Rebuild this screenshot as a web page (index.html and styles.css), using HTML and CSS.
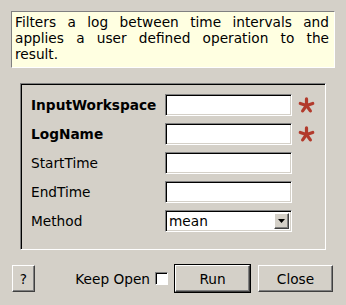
FILE: index.html
```html
<!DOCTYPE html>
<html lang="en">
<head>
  <meta charset="UTF-8" />
  <title>FilterLogByTime</title>
  <link rel="stylesheet" href="styles.css">
</head>
<body>
  <div class="dialog">
    <div class="description">
      Filters a log between time intervals and applies a user defined operation to the result.
    </div>

    <div class="group">
      <div class="row">
        <label class="bold">InputWorkspace</label>
        <span class="field"></span>
        <svg class="star" viewBox="0 0 18 18" aria-hidden="true">
          <g stroke="#b23a2c" stroke-width="3.4" stroke-linecap="round">
            <line x1="9" y1="9" x2="9" y2="2"/>
            <line x1="9" y1="9" x2="15.6" y2="6.8"/>
            <line x1="9" y1="9" x2="13.1" y2="14.7"/>
            <line x1="9" y1="9" x2="4.9" y2="14.7"/>
            <line x1="9" y1="9" x2="2.4" y2="6.8"/>
          </g>
        </svg>
      </div>
      <div class="row">
        <label class="bold">LogName</label>
        <span class="field"></span>
        <svg class="star" viewBox="0 0 18 18" aria-hidden="true">
          <g stroke="#b23a2c" stroke-width="3.4" stroke-linecap="round">
            <line x1="9" y1="9" x2="9" y2="2"/>
            <line x1="9" y1="9" x2="15.6" y2="6.8"/>
            <line x1="9" y1="9" x2="13.1" y2="14.7"/>
            <line x1="9" y1="9" x2="4.9" y2="14.7"/>
            <line x1="9" y1="9" x2="2.4" y2="6.8"/>
          </g>
        </svg>
      </div>
      <div class="row">
        <label>StartTime</label>
        <span class="field"></span>
      </div>
      <div class="row">
        <label>EndTime</label>
        <span class="field"></span>
      </div>
      <div class="row">
        <label>Method</label>
        <span class="field combo">
          <span class="combo-text">mean</span>
          <span class="combo-btn">
            <svg viewBox="0 0 7 4" width="7" height="4" aria-hidden="true"><polygon points="0,0 7,0 3.5,4" fill="#000"/></svg>
          </span>
        </span>
      </div>
    </div>

    <div class="buttons">
      <button class="btn help">?</button>
      <span class="spacer"></span>
      <span class="keep">Keep Open</span>
      <span class="check"></span>
      <button class="btn run">Run</button>
      <button class="btn close">Close</button>
    </div>
  </div>
</body>
</html>
```

FILE: styles.css
```css
* {
  box-sizing: border-box;
}

body {
  margin: 0;
  background: #d4d0c8;
  font-family: "DejaVu Sans", sans-serif;
  font-size: 13.7px;
  color: #000;
}

.dialog {
  width: 346px;
  height: 305px;
  padding: 11px 11px 0 11px;
}

.description {
  background: #ffffe1;
  border-top: 1px solid #808080;
  border-left: 1px solid #808080;
  border-right: 1px solid #fff;
  border-bottom: 1px solid #fff;
  height: 57px;
  padding: 2px 5px 0 3px;
  line-height: 16px;
  text-align: justify;
}

.group {
  margin: 15px 9px 0 9px;
  height: 167px;
  border-top: 1px solid #808080;
  border-left: 1px solid #808080;
  border-right: 1px solid #fff;
  border-bottom: 1px solid #fff;
  box-shadow: inset 1px 1px 0 #000;
  padding: 10px 0 0 10px;
  display: flex;
  flex-direction: column;
  gap: 7px;
}

.row {
  display: flex;
  align-items: center;
  height: 22px;
}

.row label {
  width: 134px;
}

.row label.bold {
  font-weight: bold;
}

.field {
  width: 127px;
  height: 22px;
  background: #fff;
  border-top: 1px solid #808080;
  border-left: 1px solid #808080;
  border-right: 1px solid #fff;
  border-bottom: 1px solid #fff;
  box-shadow: inset 1px 1px 0 #000, inset -1px -1px 0 #d4d0c8;
}

.star {
  width: 17px;
  height: 17px;
  margin-left: 6px;
}

.combo {
  display: flex;
  align-items: center;
  padding: 2px 2px 2px 3px;
}

.combo-text {
  flex: 1;
}

.combo-btn {
  width: 15px;
  height: 16px;
  background: #d4d0c8;
  border-top: 1px solid #fff;
  border-left: 1px solid #fff;
  border-right: 1px solid #404040;
  border-bottom: 1px solid #404040;
  box-shadow: inset -1px -1px 0 #808080;
  display: flex;
  align-items: center;
  justify-content: center;
}

.buttons {
  display: flex;
  align-items: center;
  margin-top: 15px;
  padding-left: 1px;
}

.btn {
  font-family: "DejaVu Sans", sans-serif;
  font-size: 13.7px;
  color: #000;
  background: #d4d0c8;
  height: 27px;
  padding: 0;
  border-top: 1px solid #fff;
  border-left: 1px solid #fff;
  border-right: 1px solid #404040;
  border-bottom: 1px solid #404040;
  box-shadow: inset -1px -1px 0 #808080;
}

.help {
  width: 23px;
}

.spacer {
  flex: 1;
}

.keep {
  margin-right: 5px;
}

.check {
  width: 13px;
  height: 13px;
  background: #fff;
  border-top: 1px solid #808080;
  border-left: 1px solid #808080;
  border-right: 1px solid #fff;
  border-bottom: 1px solid #fff;
  box-shadow: inset 1px 1px 0 #000;
  margin-right: 7px;
}

.run {
  width: 75px;
  outline: 1px solid #000;
  outline-offset: 0;
}

.close {
  width: 75px;
  margin-left: 8px;
  margin-right: 2px;
}
```
